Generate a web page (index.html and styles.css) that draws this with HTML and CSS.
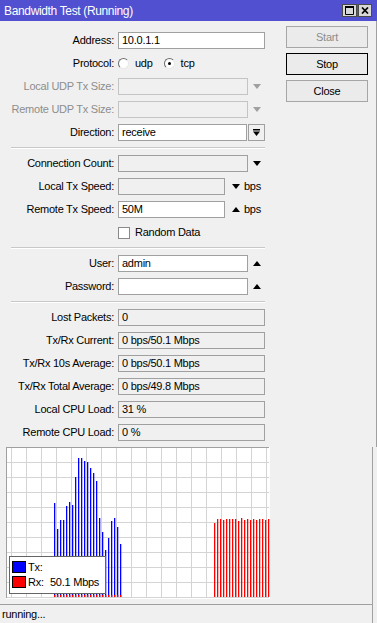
FILE: index.html
```html
<!DOCTYPE html>
<html lang="en">
<head>
    <meta charset="UTF-8">
    <meta name="viewport" content="width=device-width, initial-scale=1.0">
    <title>Bandwidth Test</title>
    <link rel="stylesheet" href="styles.css">
</head>
<body>
    <div class="window">
        <div class="titlebar">
            <span class="title">Bandwidth Test (Running)</span>
            <div class="title-buttons">
                <span class="tbtn tbtn-max">
                    <svg width="9" height="9" viewBox="0 0 9 9"><path d="M0.5 1.5h8v7h-8z" fill="none" stroke="#000"/><rect x="0" y="0" width="9" height="2"/></svg>
                </span>
                <span class="tbtn tbtn-close">
                    <svg width="8" height="7" viewBox="0 0 8 7"><path d="M1 0.5l6 6M7 0.5l-6 6" stroke="#000" stroke-width="1.7"/></svg>
                </span>
            </div>
        </div>

        <div class="main">
            <div class="form">
                <div class="lbl">Address:</div>
                <div class="ctl"><span class="field w-full">10.0.1.1</span></div>

                <div class="lbl">Protocol:</div>
                <div class="ctl">
                    <span class="radio"></span><span class="radio-text udp">udp</span>
                    <span class="radio on"></span><span class="radio-text">tcp</span>
                </div>

                <div class="lbl off">Local UDP Tx Size:</div>
                <div class="ctl"><span class="field off w-130"></span><span class="slot"><span class="tri down dim"></span></span></div>

                <div class="lbl off">Remote UDP Tx Size:</div>
                <div class="ctl"><span class="field off w-130"></span><span class="slot"><span class="tri down dim"></span></span></div>

                <div class="lbl">Direction:</div>
                <div class="ctl">
                    <span class="field w-129">receive</span>
                    <span class="dbtn">
                        <svg width="7" height="7" viewBox="0 0 7 7"><rect x="0" y="0" width="7" height="1.5"/><path d="M0 2.5h7L3.5 7z"/></svg>
                    </span>
                </div>

                <div class="sep"></div>

                <div class="lbl">Connection Count:</div>
                <div class="ctl"><span class="field ro w-130"></span><span class="slot"><span class="tri down"></span></span></div>

                <div class="lbl">Local Tx Speed:</div>
                <div class="ctl"><span class="field ro w-107"></span><span class="tri down unit-tri"></span><span class="unit">bps</span></div>

                <div class="lbl">Remote Tx Speed:</div>
                <div class="ctl"><span class="field w-107">50M</span><span class="tri up unit-tri"></span><span class="unit">bps</span></div>

                <div class="lbl"></div>
                <div class="ctl"><span class="check"></span><span>Random Data</span></div>

                <div class="sep"></div>

                <div class="lbl">User:</div>
                <div class="ctl"><span class="field w-130">admin</span><span class="slot"><span class="tri up"></span></span></div>

                <div class="lbl">Password:</div>
                <div class="ctl"><span class="field w-130"></span><span class="slot"><span class="tri up"></span></span></div>

                <div class="sep"></div>

                <div class="lbl">Lost Packets:</div>
                <div class="ctl"><span class="field ro w-full">0</span></div>

                <div class="lbl">Tx/Rx Current:</div>
                <div class="ctl"><span class="field ro w-full">0 bps/50.1 Mbps</span></div>

                <div class="lbl">Tx/Rx 10s Average:</div>
                <div class="ctl"><span class="field ro w-full">0 bps/50.1 Mbps</span></div>

                <div class="lbl">Tx/Rx Total Average:</div>
                <div class="ctl"><span class="field ro w-full">0 bps/49.8 Mbps</span></div>

                <div class="lbl">Local CPU Load:</div>
                <div class="ctl"><span class="field ro w-full">31 %</span></div>

                <div class="lbl">Remote CPU Load:</div>
                <div class="ctl"><span class="field ro w-full">0 %</span></div>
            </div>

            <div class="actions">
                <button class="btn off">Start</button>
                <button class="btn default">Stop</button>
                <button class="btn">Close</button>
            </div>
        </div>

        <div class="lower">
            <div class="chart">
                <svg id="chart" width="264" height="152" viewBox="0 0 264 152"></svg>
                <div class="legend">
                    <div class="legend-row"><span class="swatch tx"></span><span class="legend-name">Tx:</span><span></span></div>
                    <div class="legend-row"><span class="swatch rx"></span><span class="legend-name">Rx:</span><span>50.1 Mbps</span></div>
                </div>
            </div>
            <div class="status">running...</div>
        </div>
    </div>

    <script>
        // bar tops in chart pixels, bottom line is at y=150
        const txBars = [56, 82, 73, 73, 59, 55, 58, 30, 11, 11, 14, 15, 21, 26, 34, 71, 85, 103, 91, 74, 71, 80, 97];
        const rxBars = [76, 72, 72, 73, 72, 72, 72, 72, 74, 71, 73, 72, 73, 72, 73, 72, 72, 73, 72];

        function drawChart() {
            const svg = document.getElementById('chart');
            let out = '<rect width="264" height="152" fill="#fff"/>';

            for (let x = 5.5; x < 263; x += 15) {
                out += `<line x1="${x}" y1="0" x2="${x}" y2="151" stroke="#d4d4d4"/>`;
            }
            for (let y = 15.5; y < 152; y += 15) {
                out += `<line x1="0" y1="${y}" x2="263" y2="${y}" stroke="#d4d4d4"/>`;
            }

            // sunken frame
            out += '<line x1="0" y1="0.5" x2="264" y2="0.5" stroke="#a0a0a0"/>';
            out += '<line x1="0.5" y1="0" x2="0.5" y2="152" stroke="#a0a0a0"/>';
            out += '<line x1="0" y1="151.5" x2="264" y2="151.5" stroke="#fff"/>';
            out += '<line x1="263.5" y1="0" x2="263.5" y2="152" stroke="#fff"/>';

            txBars.forEach((top, i) => {
                const x = 48 + i * 3;
                out += `<rect x="${x}" y="${top}" width="1.3" height="${150 - top}" fill="#0000ff"/>`;
                out += `<rect x="${x}" y="148" width="1.3" height="2" fill="#ff0000"/>`;
            });

            rxBars.forEach((top, i) => {
                const x = 208 + i * 3;
                out += `<rect x="${x}" y="${top}" width="1.3" height="${150 - top}" fill="#ff0000"/>`;
            });

            svg.innerHTML = out;
        }

        drawChart();
    </script>
</body>
</html>
```

FILE: styles.css
```css
body {
    margin: 0;
    background: #f0f0f0;
    font-family: "Liberation Sans", Arial, sans-serif;
    font-size: 11px;
    letter-spacing: -0.25px;
    color: #000;
}

.window {
    width: 377px;
    height: 623px;
    display: flex;
    flex-direction: column;
    overflow: hidden;
}

.titlebar {
    flex: none;
    height: 21px;
    background: #5050d0;
    color: #fff;
    display: flex;
    align-items: center;
    justify-content: space-between;
    padding-left: 4px;
}

.title {
    font-size: 12px;
    letter-spacing: -0.35px;
}

.title-buttons {
    display: flex;
    gap: 1px;
    margin-right: 5px;
}

.tbtn {
    box-sizing: border-box;
    height: 13px;
    background: #d8d8d8;
    border: 1px solid #4a4a4a;
    display: flex;
    align-items: center;
    justify-content: center;
}

.tbtn-max {
    width: 15px;
}

.tbtn-close {
    width: 14px;
}

.main {
    flex: none;
    display: flex;
    box-sizing: border-box;
    width: 377px;
    border-right: 1px solid #a0a0a0;
}

.form {
    display: grid;
    grid-template-columns: 114px 147px;
    column-gap: 4px;
    row-gap: 6px;
    padding: 11px 0 6px;
}

.lbl {
    text-align: right;
    line-height: 17px;
    height: 17px;
    white-space: nowrap;
}

.lbl.off {
    color: #8d8d8d;
}

.ctl {
    display: flex;
    align-items: center;
    height: 17px;
    line-height: 17px;
    white-space: nowrap;
}

.field {
    box-sizing: border-box;
    height: 17px;
    border: 1px solid #a0a0a0;
    background: #fff;
    padding-left: 3px;
    line-height: 15px;
}

.field.ro {
    background: #f0f0f0;
}

.field.off {
    background: #f0f0f0;
    border-color: #c4c4c4;
}

.w-full {
    width: 147px;
}

.w-130 {
    width: 130px;
}

.w-129 {
    width: 129px;
}

.w-107 {
    width: 107px;
}

.slot {
    width: 17px;
    display: flex;
    justify-content: center;
}

.tri {
    width: 0;
    height: 0;
    border-left: 4.5px solid transparent;
    border-right: 4.5px solid transparent;
}

.tri.down {
    border-top: 5px solid #000;
}

.tri.up {
    border-bottom: 5px solid #000;
}

.tri.dim {
    border-top-color: #a0a0a0;
}

.unit-tri {
    margin-left: 7px;
    margin-right: 4px;
}

.dbtn {
    box-sizing: border-box;
    width: 17px;
    height: 17px;
    margin-left: 1px;
    border: 1px solid #a0a0a0;
    background: #f0f0f0;
    display: flex;
    align-items: center;
    justify-content: center;
}

.radio {
    position: relative;
    box-sizing: border-box;
    width: 11px;
    height: 11px;
    border-radius: 50%;
    border: 1px solid;
    border-color: #6d6d6d #e8e8e8 #e8e8e8 #6d6d6d;
    background: #fff;
    margin-right: 6px;
}

.radio.on::after {
    content: "";
    position: absolute;
    left: 3px;
    top: 3px;
    width: 3px;
    height: 3px;
    border-radius: 50%;
    background: #000;
}

.radio-text.udp {
    margin-right: 11px;
}

.check {
    box-sizing: border-box;
    width: 12px;
    height: 12px;
    border: 1px solid #8a8a8a;
    background: #fff;
    margin-right: 5px;
}

.sep {
    grid-column: 1 / -1;
    margin-left: 11px;
    height: 0;
    border-top: 1px solid #c8c8c8;
    border-bottom: 1px solid #fff;
}

.actions {
    display: flex;
    flex-direction: column;
    gap: 5px;
    margin-left: 21px;
    padding-top: 5px;
}

.btn {
    box-sizing: border-box;
    width: 82px;
    height: 22px;
    border: 1px solid #a6a6a6;
    background: #ebebeb;
    font: inherit;
    letter-spacing: inherit;
    color: #000;
    padding: 0;
}

.btn.off {
    color: #8d8d8d;
}

.btn.default {
    border-color: #000;
}

.lower {
    flex: 1;
    display: flex;
    flex-direction: column;
    box-sizing: border-box;
    width: 373px;
    border-right: 1px solid #a0a0a0;
}

.chart {
    position: relative;
    width: 264px;
    height: 152px;
    margin-left: 6px;
}

.chart svg {
    display: block;
}

.legend {
    position: absolute;
    left: 3px;
    top: 109px;
    box-sizing: border-box;
    width: 97px;
    height: 38px;
    border: 1px solid #646464;
    background: #fff;
    padding: 4px 0 0 2px;
}

.legend-row {
    display: flex;
    align-items: center;
    height: 15px;
    margin-top: -1.5px;
}

.legend-row + .legend-row {
    margin-top: 0;
}

.swatch {
    box-sizing: border-box;
    width: 14px;
    height: 12px;
    border: 1px solid #000;
    margin-right: 2px;
}

.swatch.tx {
    background: #0000ff;
}

.swatch.rx {
    background: #ff0000;
}

.legend-name {
    width: 22px;
}

.status {
    flex: 1;
    margin-top: 5px;
    border-top: 1px solid #a0a0a0;
    padding-left: 2px;
    line-height: 18px;
}
```
